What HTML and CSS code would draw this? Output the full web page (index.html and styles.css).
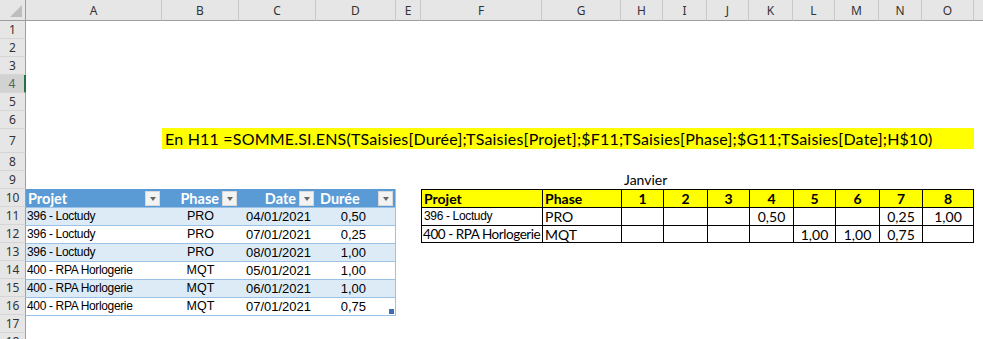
FILE: index.html
```html
<!DOCTYPE html>
<html lang="fr">
<head>
<meta charset="utf-8">
<title>Feuille</title>
<link rel="stylesheet" href="styles.css">
</head>
<body>
<div class="sheet">
  <div class="corner"><span class="tri"></span></div>
  <div class="ch">A</div><div class="ch">B</div><div class="ch">C</div><div class="ch">D</div><div class="ch">E</div><div class="ch">F</div><div class="ch">G</div><div class="ch">H</div><div class="ch">I</div><div class="ch">J</div><div class="ch">K</div><div class="ch">L</div><div class="ch">M</div><div class="ch">N</div><div class="ch">O</div><div class="ch fill"></div>

  <div class="rh">1</div><div class="rh">2</div><div class="rh">3</div><div class="rh sel">4</div><div class="rh">5</div><div class="rh">6</div><div class="rh">7</div><div class="rh">8</div><div class="rh">9</div><div class="rh">10</div><div class="rh">11</div><div class="rh">12</div><div class="rh">13</div><div class="rh">14</div><div class="rh">15</div><div class="rh">16</div><div class="rh">17</div><div class="rh">18</div>

  <div class="formula">En H11 =SOMME.SI.ENS(TSaisies[Durée];TSaisies[Projet];$F11;TSaisies[Phase];$G11;TSaisies[Date];H$10)</div>

  <div class="month">Janvier</div>

  <div class="ltable">
    <div class="lh lh-a"><span>Projet</span><span class="flt"></span></div>
    <div class="lh lh-b"><span>Phase</span><span class="flt"></span></div>
    <div class="lh lh-c"><span>Date</span><span class="flt"></span></div>
    <div class="lh lh-d"><span>Durée</span><span class="flt"></span></div>

    <div class="lc band proj">396 - Loctudy</div><div class="lc band ph">PRO</div><div class="lc band dt">04/01/2021</div><div class="lc band du">0,50</div>
    <div class="lc proj">396 - Loctudy</div><div class="lc ph">PRO</div><div class="lc dt">07/01/2021</div><div class="lc du">0,25</div>
    <div class="lc band proj">396 - Loctudy</div><div class="lc band ph">PRO</div><div class="lc band dt">08/01/2021</div><div class="lc band du">1,00</div>
    <div class="lc proj">400 - RPA Horlogerie</div><div class="lc ph">MQT</div><div class="lc dt">05/01/2021</div><div class="lc du">1,00</div>
    <div class="lc band proj">400 - RPA Horlogerie</div><div class="lc band ph">MQT</div><div class="lc band dt">06/01/2021</div><div class="lc band du">1,00</div>
    <div class="lc proj">400 - RPA Horlogerie</div><div class="lc ph">MQT</div><div class="lc dt">07/01/2021</div><div class="lc du">0,75<span class="grip"></span></div>
  </div>

  <div class="rtable">
    <div class="rc hd left">Projet</div><div class="rc hd left">Phase</div><div class="rc hd">1</div><div class="rc hd">2</div><div class="rc hd">3</div><div class="rc hd">4</div><div class="rc hd">5</div><div class="rc hd">6</div><div class="rc hd">7</div><div class="rc hd">8</div>

    <div class="rc left arial">396 - Loctudy</div><div class="rc left">PRO</div><div class="rc"></div><div class="rc"></div><div class="rc"></div><div class="rc">0,50</div><div class="rc"></div><div class="rc"></div><div class="rc">0,25</div><div class="rc">1,00</div>

    <div class="rc left tight">400 - RPA Horlogerie</div><div class="rc left">MQT</div><div class="rc"></div><div class="rc"></div><div class="rc"></div><div class="rc"></div><div class="rc">1,00</div><div class="rc">1,00</div><div class="rc">0,75</div><div class="rc"></div>
  </div>
</div>
</body>
</html>
```

FILE: styles.css
```css
* { box-sizing: border-box; }

html, body {
  margin: 0;
  padding: 0;
  background: #ffffff;
  overflow: hidden;
}

.sheet {
  width: 983px;
  height: 339px;
  overflow: hidden;
  display: grid;
  grid-template-columns: 26px 136px 77px 77px 80px 25px 121px 79px 42px 44px 42px 44px 42px 44px 43px 52px 1fr;
  grid-template-rows: 21px repeat(6, 18px) 24px repeat(11, 18px);
  font-family: "Lato", "Liberation Sans", sans-serif;
  color: #000;
}

/* column headers */
.corner {
  position: relative;
  background: #e6e6e6;
  border-right: 1px solid #9e9e9e;
  border-bottom: 1px solid #9e9e9e;
}
.tri {
  position: absolute;
  right: 3px;
  bottom: 3px;
  width: 0;
  height: 0;
  border-left: 12px solid transparent;
  border-bottom: 12px solid #bdbdbd;
}
.ch {
  background: #e6e6e6;
  border-right: 1px solid #c8c8c8;
  border-bottom: 1px solid #9e9e9e;
  font-family: "Noto Sans", "DejaVu Sans", sans-serif;
  font-size: 12px;
  color: #333;
  display: flex;
  align-items: center;
  justify-content: center;
  padding-top: 1px;
}
.ch.fill { border-right: none; }

/* row headers */
.rh {
  grid-column: 1;
  background: #e6e6e6;
  border-right: 1px solid #9e9e9e;
  border-bottom: 1px solid #d5d5d5;
  font-family: "Noto Sans", "DejaVu Sans", sans-serif;
  font-size: 12px;
  color: #333;
  display: flex;
  align-items: center;
  justify-content: center;
  overflow: hidden;
}
.rh.sel {
  background: #d2d2d2;
  color: #4d6b59;
  border-right: 2px solid #217346;
}

/* formula banner */
.formula {
  grid-row: 8;
  grid-column: 3 / 17;
  align-self: start;
  height: 21px;
  margin-top: -1px;
  background: #ffff00;
  font-size: 16px;
  letter-spacing: 0.2px;
  line-height: 21px;
  padding-left: 3px;
  white-space: nowrap;
}

.month {
  grid-row: 10;
  grid-column: 9 / 11;
  font-size: 14px;
  line-height: 18px;
  padding-left: 3px;
}

/* left (Excel table) */
.ltable {
  grid-row: 11 / 18;
  grid-column: 2 / 6;
  display: grid;
  grid-template-columns: 136px 77px 77px 79px;
  grid-template-rows: repeat(7, 18px);
  align-self: start;
  border-right: 1px solid #9bc2e6;
  border-bottom: 1px solid #9bc2e6;
  height: 127px;
}
.lh {
  background: #5b9bd5;
  color: #fff;
  font-weight: bold;
  font-size: 14.5px;
  display: flex;
  align-items: center;
  gap: 3px;
  padding-right: 2px;
}
.lh-a { justify-content: space-between; padding-left: 2px; }
.lh-b, .lh-c { justify-content: flex-end; }
.lh-d { justify-content: space-between; padding-left: 4px; padding-right: 2px; }
.flt {
  position: relative;
  width: 15px;
  height: 15px;
  background: #f3f3f3;
  border: 1px solid #d9d9d9;
  flex: none;
}
.flt::after {
  content: "";
  position: absolute;
  left: 4px;
  top: 5px;
  border-left: 3px solid transparent;
  border-right: 3px solid transparent;
  border-top: 4px solid #666;
}
.lc {
  border-top: 1px solid #9bc2e6;
  font-family: "Liberation Sans", Arial, sans-serif;
  font-size: 13px;
  line-height: 17px;
  white-space: nowrap;
  position: relative;
}
.lc.band { background: #ddebf7; }
.proj { padding-left: 1px; font-size: 12px; letter-spacing: -0.35px; }
.ph { text-align: center; font-size: 12.5px; }
.dt { text-align: right; padding-right: 5px; }
.du { text-align: right; padding-right: 29px; }
.grip {
  position: absolute;
  right: 1px;
  bottom: 1px;
  width: 5px;
  height: 5px;
  background: #3d6fb0;
}

/* right (formula result) table */
.rtable {
  grid-row: 11 / 14;
  grid-column: 7 / 17;
  align-self: start;
  display: grid;
  grid-template-columns: 120px 78px 41px 43px 41px 43px 41px 43px 42px 50px;
  grid-template-rows: 17px 17px 16px;
  gap: 1px;
  padding: 1px;
  background: #000;
  width: 553px;
}
.rc {
  background: #fff;
  font-size: 14px;
  line-height: 17px;
  text-align: center;
  white-space: nowrap;
  overflow: hidden;
}
.rc.hd { background: #ffff00; font-weight: bold; }
.rc.left { text-align: left; padding-left: 2px; }
.rc.tight { font-size: 13.5px; letter-spacing: -0.45px; padding-left: 1px; }
.rc.arial { font-family: "Liberation Sans", Arial, sans-serif; font-size: 12px; letter-spacing: -0.35px; }
```
